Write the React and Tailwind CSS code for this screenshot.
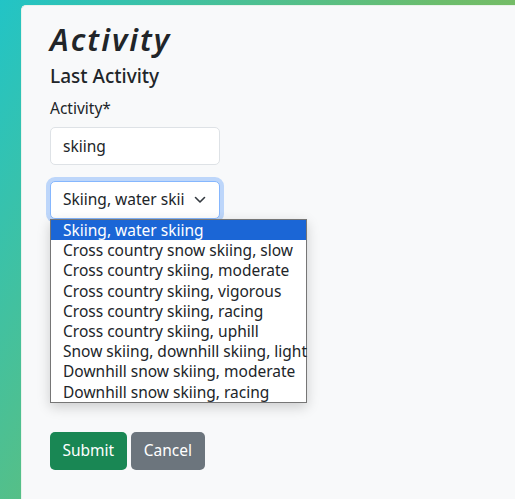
import React from 'react';

const options = [
    'Skiing, water skiing',
    'Cross country snow skiing, slow',
    'Cross country skiing, moderate',
    'Cross country skiing, vigorous',
    'Cross country skiing, racing',
    'Cross country skiing, uphill',
    'Snow skiing, downhill skiing, light',
    'Downhill snow skiing, moderate',
    'Downhill snow skiing, racing',
];

const App = () => {
    return (
        <div className="min-h-screen bg-[linear-gradient(120deg,#22c4c6_0%,#6cbd6c_55%,#95ba52_100%)] pl-[21px] pt-[5px] font-['Noto_Sans',sans-serif] text-[#212529]">
            <div className="min-h-[494px] rounded-tl-[5px] bg-[#f8f9fa] pl-[28px] pt-[13px] border-l border-t border-[#e9f3ea]">
                <h1 className="text-[31px] leading-[40px] font-semibold italic tracking-[2px] text-[#212529]">Activity</h1>
                <h2 className="mt-[4px] text-[19px] leading-[26px] font-medium">Last Activity</h2>
                <form className="mt-[9px]" onSubmit={e => e.preventDefault()}>
                    <label className="block text-[15.5px] leading-[20px]">Activity*</label>
                    <input
                        type="text"
                        defaultValue="skiing"
                        className="mt-[9px] block h-[38px] w-[170px] rounded-[5px] border border-[#dee2e6] bg-white px-[12px] text-[15.5px] outline-none"
                    />
                    <div className="relative mt-[16px] w-[170px]">
                        <div className="flex h-[38px] items-center justify-between rounded-[5px] border border-[#86b7fe] bg-white pl-[12px] pr-[13px] text-[15.5px] shadow-[0_0_0_4px_rgba(13,110,253,0.25)]">
                            <span className="whitespace-nowrap overflow-hidden">Skiing, water skii</span>
                            <svg width="12" height="8" viewBox="0 0 12 8" fill="none" stroke="#343a40" strokeWidth="1.6" strokeLinecap="round" strokeLinejoin="round">
                                <path d="M1.5 1.5 6 6l4.5-4.5" />
                            </svg>
                        </div>
                        <ul className="absolute left-0 top-[38px] z-10 w-[257px] border border-[#767676] bg-white shadow-[0_4px_12px_rgba(0,0,0,0.18)]">
                            {options.map((opt, i) => (
                                <li
                                    key={opt}
                                    className={`h-[20.2px] whitespace-nowrap pl-[12px] text-[15.5px] leading-[20px] ${i === 0 ? 'bg-[#1b66d6] text-white' : 'text-[#212529]'}`}
                                >
                                    {opt}
                                </li>
                            ))}
                        </ul>
                    </div>
                    <div className="mt-[213px] flex gap-[4px]">
                        <button type="submit" className="h-[38px] rounded-[5px] bg-[#198754] px-[12.5px] text-[15.5px] text-white">Submit</button>
                        <button type="button" className="h-[38px] rounded-[5px] bg-[#6c757d] px-[13px] text-[15.5px] text-white">Cancel</button>
                    </div>
                </form>
            </div>
        </div>
    );
};

export default App;
